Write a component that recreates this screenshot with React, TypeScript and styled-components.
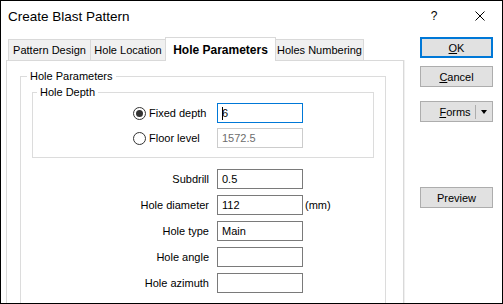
import React from 'react';
import styled, { createGlobalStyle } from 'styled-components';

const GlobalStyle = createGlobalStyle`
  body {
    margin: 0;
    background: #ffffff;
  }
  * {
    box-sizing: border-box;
  }
`;

const Window = styled.div`
  width: 503px;
  height: 304px;
  border: 1px solid #000000;
  background: #ffffff;
  display: flex;
  flex-direction: column;
  overflow: hidden;
  font-family: 'Liberation Sans', Arial, sans-serif;
  font-size: 11px;
  color: #000000;
`;

const TitleBar = styled.div`
  height: 30px;
  flex: none;
  display: flex;
  align-items: center;
`;

const Title = styled.div`
  flex: 1;
  padding-left: 7px;
  font-size: 13.5px;
`;

const CaptionButton = styled.div<{ $w: number }>`
  width: ${(p) => p.$w}px;
  height: 30px;
  display: flex;
  align-items: center;
  justify-content: center;
  font-size: 12px;
`;

const Body = styled.div`
  flex: 1;
  min-height: 0;
  display: flex;
  padding: 6px 9px 0 5px;
`;

const TabControl = styled.div`
  width: 398px;
  display: flex;
  flex-direction: column;
`;

const TabStrip = styled.div`
  height: 23px;
  flex: none;
  display: flex;
  align-items: flex-end;
  padding-left: 2px;
`;

const Tab = styled.div<{ $w: number; $active?: boolean; $first?: boolean }>`
  position: relative;
  z-index: ${(p) => (p.$active ? 1 : 0)};
  width: ${(p) => p.$w}px;
  height: ${(p) => (p.$active ? 24 : 21)}px;
  margin-left: ${(p) => (p.$first ? 0 : -1)}px;
  margin-bottom: ${(p) => (p.$active ? -1 : 0)}px;
  border: 1px solid #d9d9d9;
  border-bottom: none;
  background: ${(p) => (p.$active ? '#ffffff' : '#f0f0f0')};
  font-weight: ${(p) => (p.$active ? 'bold' : 'normal')};
  font-size: ${(p) => (p.$active ? 12 : 11)}px;
  display: flex;
  align-items: center;
  justify-content: center;
  white-space: nowrap;
`;

const Panel = styled.div`
  flex: none;
  height: 260px;
  border: 1px solid #d9d9d9;
  box-shadow: 1px 0 0 #f0f0f0;
  background: #ffffff;
  padding: 8px 17px 0 13px;
`;

const GroupBox = styled.fieldset<{ $pad: string }>`
  margin: 0;
  min-width: 0;
  border: 1px solid #dcdcdc;
  padding: ${(p) => p.$pad};
`;

const GroupLabel = styled.legend<{ $offset: number }>`
  margin-left: ${(p) => p.$offset}px;
  padding: 0 3px;
  line-height: 15px;
`;

const DepthGrid = styled.div`
  margin: 3px 0 9px 100px;
  display: grid;
  grid-template-columns: 84px 86px;
  grid-auto-rows: 20px;
  row-gap: 5px;
`;

const RadioOption = styled.div`
  display: flex;
  align-items: center;
  gap: 3px;
`;

const RadioCircle = styled.span<{ $checked?: boolean }>`
  width: 13px;
  height: 13px;
  border: 1px solid #333333;
  border-radius: 50%;
  display: flex;
  align-items: center;
  justify-content: center;
  &::after {
    content: '';
    display: ${(p) => (p.$checked ? 'block' : 'none')};
    width: 7px;
    height: 7px;
    border-radius: 50%;
    background: #333333;
  }
`;

const FieldGrid = styled.div`
  margin: 11px 0 20px 0;
  display: grid;
  grid-template-columns: 185px 86px auto;
  grid-auto-rows: 20px;
  row-gap: 6px;
  align-items: center;
`;

const FieldLabel = styled.div`
  text-align: right;
  padding-right: 8px;
`;

const Unit = styled.div`
  padding-left: 2px;
`;

const TextBox = styled.div<{ $state?: 'focus' | 'disabled' }>`
  height: 20px;
  padding: 0 4px;
  display: flex;
  align-items: center;
  background: #ffffff;
  border: 1px solid
    ${(p) => (p.$state === 'focus' ? '#0078d7' : p.$state === 'disabled' ? '#cccccc' : '#7a7a7a')};
  color: ${(p) => (p.$state === 'disabled' ? '#6d6d6d' : '#000000')};
`;

const Caret = styled.span`
  width: 1px;
  height: 13px;
  margin-right: -1px;
  background: #000000;
`;

const ButtonColumn = styled.div`
  width: 73px;
  margin-left: 16px;
  display: flex;
  flex-direction: column;
`;

const Button = styled.div<{ $default?: boolean; $top: number }>`
  height: 21px;
  margin-top: ${(p) => p.$top}px;
  background: #e1e1e1;
  border: ${(p) => (p.$default ? '2px solid #0078d7' : '1px solid #adadad')};
  display: flex;
  align-items: center;
  justify-content: center;
`;

const SplitMain = styled.div`
  flex: 1;
  padding-left: 14px;
  text-align: center;
`;

const SplitDivider = styled.span`
  width: 1px;
  height: 14px;
  background: #adadad;
`;

const SplitArrow = styled.span`
  width: 16px;
  display: flex;
  justify-content: center;
  &::after {
    content: '';
    border-left: 3.5px solid transparent;
    border-right: 3.5px solid transparent;
    border-top: 4px solid #000000;
  }
`;

const AccessKey = styled.span`
  text-decoration: underline;
`;

const fields = [
  { label: 'Subdrill', value: '0.5' },
  { label: 'Hole diameter', value: '112', unit: '(mm)' },
  { label: 'Hole type', value: 'Main' },
  { label: 'Hole angle', value: '' },
  { label: 'Hole azimuth', value: '' },
];

const tabs = [
  { name: 'Pattern Design', w: 83 },
  { name: 'Hole Location', w: 76 },
  { name: 'Hole Parameters', w: 111, active: true },
  { name: 'Holes Numbering', w: 89 },
];

const App = () => (
  <>
    <GlobalStyle />
    <Window>
      <TitleBar>
        <Title>Create Blast Pattern</Title>
        <CaptionButton $w={46}>?</CaptionButton>
        <CaptionButton $w={45}>
          <svg width="10" height="10" viewBox="0 0 10 10">
            <path d="M0.5 0.5 L9.5 9.5 M9.5 0.5 L0.5 9.5" stroke="#000" strokeWidth="1" />
          </svg>
        </CaptionButton>
      </TitleBar>
      <Body>
        <TabControl>
          <TabStrip>
            {tabs.map((t, i) => (
              <Tab key={t.name} $w={t.w} $active={t.active} $first={i === 0}>
                {t.name}
              </Tab>
            ))}
          </TabStrip>
          <Panel>
            <GroupBox $pad="1px 11px 0 11px">
              <GroupLabel $offset={-5}>Hole Parameters</GroupLabel>
              <GroupBox $pad="0">
                <GroupLabel $offset={4}>Hole Depth</GroupLabel>
                <DepthGrid>
                  <RadioOption>
                    <RadioCircle $checked />
                    Fixed depth
                  </RadioOption>
                  <TextBox $state="focus">
                    <Caret />6
                  </TextBox>
                  <RadioOption>
                    <RadioCircle />
                    Floor level
                  </RadioOption>
                  <TextBox $state="disabled">1572.5</TextBox>
                </DepthGrid>
              </GroupBox>
              <FieldGrid>
                {fields.map((f) => (
                  <React.Fragment key={f.label}>
                    <FieldLabel>{f.label}</FieldLabel>
                    <TextBox>{f.value}</TextBox>
                    <Unit>{f.unit}</Unit>
                  </React.Fragment>
                ))}
              </FieldGrid>
            </GroupBox>
          </Panel>
        </TabControl>
        <ButtonColumn>
          <Button $default $top={0}>
            <AccessKey>O</AccessKey>K
          </Button>
          <Button $top={8}>
            <AccessKey>C</AccessKey>ancel
          </Button>
          <Button $top={14}>
            <SplitMain>
              <AccessKey>F</AccessKey>orms
            </SplitMain>
            <SplitDivider />
            <SplitArrow />
          </Button>
          <Button $top={65}>Preview</Button>
        </ButtonColumn>
      </Body>
    </Window>
  </>
);

export default App;
